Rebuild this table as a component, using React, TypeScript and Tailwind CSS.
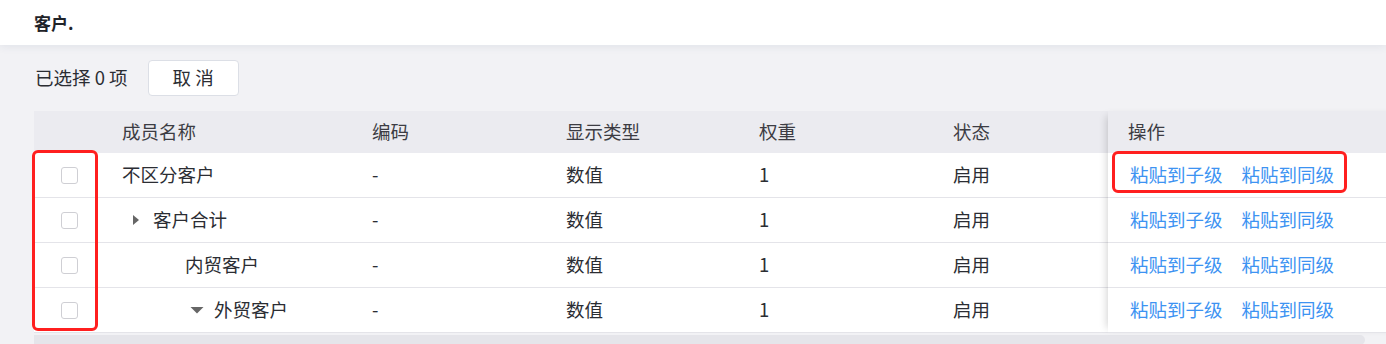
import type { ReactNode } from 'react';

type Row = {
  name: string;
  indent: number;
  caret?: 'right' | 'down';
};

const rows: Row[] = [
  { name: '不区分客户', indent: 18 },
  { name: '客户合计', indent: 25, caret: 'right' },
  { name: '内贸客户', indent: 81 },
  { name: '外贸客户', indent: 85, caret: 'down' },
];

function Caret({ dir }: { dir: 'right' | 'down' }) {
  if (dir === 'right') {
    return (
      <svg width="14" height="14" viewBox="0 0 14 14" className="mr-[10px] shrink-0">
        <path d="M4 2 L10 7 L4 12 Z" fill="#666" />
      </svg>
    );
  }
  return (
    <svg width="16" height="14" viewBox="0 0 16 14" className="mr-[9px] shrink-0">
      <path d="M1.5 4 L14.5 4 L8 10.5 Z" fill="#666" />
    </svg>
  );
}

function Cell({ w, children, className = '' }: { w: string; children?: ReactNode; className?: string }) {
  return <div className={`${w} shrink-0 flex items-center ${className}`}>{children}</div>;
}

export default function App() {
  return (
    <div className="relative w-[1386px] h-[344px] overflow-hidden bg-[#f2f2f5] text-[#2b2d33] font-['Noto_Sans_CJK_SC',sans-serif]">
      {/* Header */}
      <div className="relative z-10 h-[45px] bg-white flex items-center pl-[34px] shadow-[0_2px_8px_rgba(40,60,100,0.08)]">
        <span className="text-[17px] font-bold text-[#1f2329]">客户.</span>
      </div>

      {/* Toolbar */}
      <div className="flex items-center pl-[35px] pt-[15px] h-[51px]">
        <span className="text-[18.5px]">已选择 0 项</span>
        <button className="ml-[20px] w-[91px] h-[36px] bg-white border border-[#dcdfe6] rounded-[4px] text-[18.5px] text-[#2b2d33]">
          取 消
        </button>
      </div>

      {/* Table */}
      <div className="ml-[34px] mt-[15px] w-[1400px]">
        <div className="flex text-[18.5px]">
          {/* scroll part */}
          <div className="w-[1074px] shrink-0">
            <div className="flex h-[42px] bg-[#ebebf0] text-[#3c3c43]">
              <Cell w="w-[70px]" />
              <Cell w="w-[250px]" className="pl-[18px]">成员名称</Cell>
              <Cell w="w-[194px]" className="pl-[18px]">编码</Cell>
              <Cell w="w-[193px]" className="pl-[18px]">显示类型</Cell>
              <Cell w="w-[194px]" className="pl-[18px]">权重</Cell>
              <Cell w="w-[173px]" className="pl-[18px]">状态</Cell>
            </div>
            {rows.map((r) => (
              <div key={r.name} className="flex h-[45px] bg-white border-b border-[#e4e4e9]">
                <Cell w="w-[70px]" className="justify-center">
                  <span className="w-[17px] h-[17px] rounded-[3px] border border-[#cfcfd4] bg-white" />
                </Cell>
                <Cell w="w-[250px]">
                  <div className="flex items-center" style={{ paddingLeft: r.indent }}>
                    {r.caret && <Caret dir={r.caret} />}
                    <span>{r.name}</span>
                  </div>
                </Cell>
                <Cell w="w-[194px]" className="pl-[18px]">-</Cell>
                <Cell w="w-[193px]" className="pl-[18px]">数值</Cell>
                <Cell w="w-[194px]" className="pl-[18px]">1</Cell>
                <Cell w="w-[173px]" className="pl-[18px]">启用</Cell>
              </div>
            ))}
          </div>

          {/* fixed action column */}
          <div className="relative z-10 flex-1 shadow-[-6px_0_8px_-5px_rgba(0,0,0,0.18)]">
            <div className="flex h-[42px] items-center bg-[#ebebf0] pl-[20px] text-[#3c3c43]">操作</div>
            {rows.map((r) => (
              <div key={r.name} className="flex h-[45px] items-center gap-[19px] bg-white border-b border-[#e4e4e9] pl-[22px] text-[#3d93f2]">
                <span>粘贴到子级</span>
                <span>粘贴到同级</span>
              </div>
            ))}
          </div>
        </div>

        {/* horizontal scrollbar track */}
        <div className="mt-[2px] h-[10px] w-[1331px] rounded-r-full bg-[#e5e5ea]" />
      </div>

      {/* red annotation boxes */}
      <div className="absolute left-[32px] top-[150px] w-[66px] h-[181px] border-[3px] border-[#ff1f1f] rounded-[6px] z-20" />
      <div className="absolute left-[1112px] top-[151px] w-[235px] h-[42px] border-[3px] border-[#ff1f1f] rounded-[6px] z-20" />
    </div>
  );
}
